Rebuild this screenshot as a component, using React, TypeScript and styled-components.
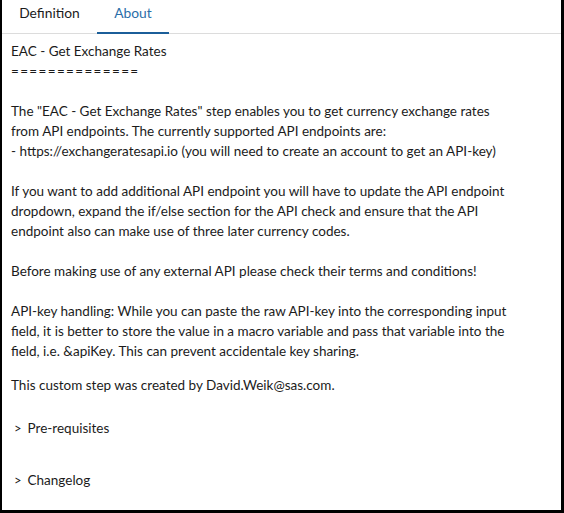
import React from "react";
import styled, { createGlobalStyle } from "styled-components";

const GlobalStyle = createGlobalStyle`
  html, body { margin: 0; padding: 0; background: #ffffff; }
  body {
    font-family: "Lato", "Open Sans", sans-serif;
    font-size: 13.5px;
    color: #1b1b1b;
  }
`;

const Frame = styled.div`
  box-sizing: border-box;
  width: 564px;
  height: 513px;
  border-left: 2px solid #000;
  border-right: 3px solid #000;
  border-bottom: 3px solid #000;
  background: #fff;
  display: flex;
  flex-direction: column;
  overflow: hidden;
`;

const TabBar = styled.div`
  display: flex;
  height: 33px;
  border-bottom: 1px solid #dcdcdc;
`;

const Tab = styled.div<{ $active?: boolean }>`
  box-sizing: border-box;
  height: 34px;
  margin-bottom: -1px;
  padding: 3px 0 0;
  width: ${(p) => (p.$active ? "72px" : "95px")};
  text-align: center;
  line-height: 19.5px;
  font-size: 13.8px;
  color: ${(p) => (p.$active ? "#2a6ea8" : "#1b1b1b")};
  border-bottom: 2px solid ${(p) => (p.$active ? "#1b5e99" : "transparent")};
`;

const Content = styled.div`
  padding: 7px 0 0 9px;
  line-height: 20px;
`;

const Para = styled.p<{ $space?: number }>`
  margin: 0 0 ${(p) => (p.$space ?? 20)}px;
  white-space: nowrap;
`;

const Rule = styled.span`
  letter-spacing: 1.35px;
`;

const DetailsList = styled.div`
  display: flex;
  flex-direction: column;
  gap: 32px;
  margin-top: 23px;
`;

const Summary = styled.div`
  display: flex;
  align-items: baseline;
  gap: 6px;
  padding-left: 3px;
  line-height: 20px;
`;

const Marker = styled.span`
  font-size: 13px;
`;

export default function App() {
  return (
    <Frame>
      <GlobalStyle />
      <TabBar>
        <Tab>Definition</Tab>
        <Tab $active>About</Tab>
      </TabBar>
      <Content>
        <Para>
          EAC - Get Exchange Rates
          <br />
          <Rule>==============</Rule>
        </Para>
        <Para>
          The "EAC - Get Exchange Rates" step enables you to get currency exchange rates
          <br />
          from API endpoints. The currently supported API endpoints are:
          <br />
          - https://exchangeratesapi.io (you will need to create an account to get an API-key)
        </Para>
        <Para>
          If you want to add additional API endpoint you will have to update the API endpoint
          <br />
          dropdown, expand the if/else section for the API check and ensure that the API
          <br />
          endpoint also can make use of three later currency codes.
        </Para>
        <Para>Before making use of any external API please check their terms and conditions!</Para>
        <Para $space={14}>
          API-key handling: While you can paste the raw API-key into the corresponding input
          <br />
          field, it is better to store the value in a macro variable and pass that variable into the
          <br />
          field, i.e. &amp;apiKey. This can prevent accidentale key sharing.
        </Para>
        <Para $space={0}>This custom step was created by David.Weik@sas.com.</Para>
        <DetailsList>
          <Summary>
            <Marker>&gt;</Marker>
            <span>Pre-requisites</span>
          </Summary>
          <Summary>
            <Marker>&gt;</Marker>
            <span>Changelog</span>
          </Summary>
        </DetailsList>
      </Content>
    </Frame>
  );
}
